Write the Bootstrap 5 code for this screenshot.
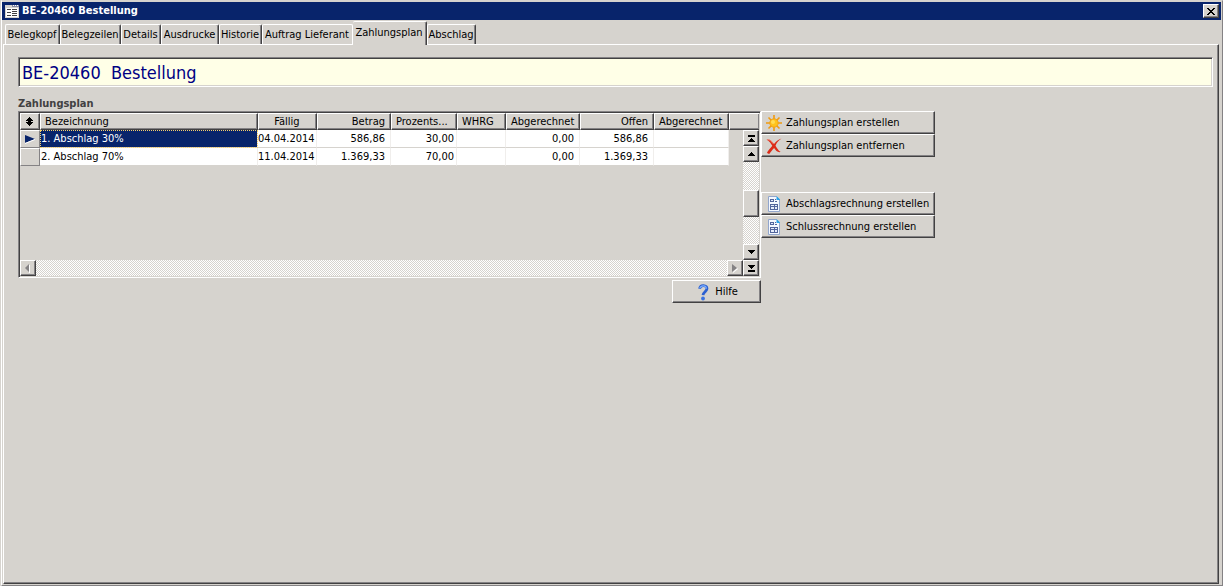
<!DOCTYPE html>
<html lang="de">
<head>
<meta charset="utf-8">
<meta name="viewport" content="width=device-width, initial-scale=1">
<title>BE-20460 Bestellung</title>
<link href="https://cdn.jsdelivr.net/npm/bootstrap@5.3.0/dist/css/bootstrap.min.css" rel="stylesheet">
<style>
:root{--face:#d6d3ce;--navy:#08246b;--shade:#848284;--dark:#424142}
body{background:var(--face);color:#000;font:11px/14px "DejaVu Sans Condensed","DejaVu Sans",sans-serif}
button{font:inherit;color:inherit;background:var(--face);border:0;padding:0;border-radius:0}
.window-frame{border:1px solid;border-color:var(--face) var(--shade) var(--shade) #fff;margin-left:1px}
.title-bar{background:var(--navy);color:#fff;height:18px;margin:1px 1px 0 0;padding:0 2px 0 3px;font-weight:bold}
.title-text{gap:3px}
.raised{border:1px solid;border-color:#fff var(--dark) var(--dark) #fff;box-shadow:inset -1px -1px var(--shade)}
.close-btn{width:16px;height:14px}
.tab-strip{padding:1px 0 0 3px;height:24px}
.tab-strip button{height:20px;border:1px solid #fff;border-right-color:var(--dark);border-bottom:0;box-shadow:inset -1px 0 var(--shade);border-radius:2px 2px 0 0;white-space:nowrap;padding:1px 1px 0 0}
.tab-strip .active{height:24px;position:relative;margin-bottom:-1px;padding-bottom:2px;padding-top:0}
.tab-strip button:nth-child(1){width:55px}
.tab-strip button:nth-child(2){width:61px}
.tab-strip button:nth-child(3){width:40px}
.tab-strip button:nth-child(4){width:58px}
.tab-strip button:nth-child(5){width:43px}
.tab-strip button:nth-child(6){width:91px;border-right-color:#fff;box-shadow:none}
.tab-strip button:nth-child(7){width:74px;border-left:0}
.tab-strip button:nth-child(8){width:49px}
.tab-page{border:1px solid;border-color:#fff var(--dark) var(--dark) #fff;box-shadow:inset -1px -1px var(--shade);margin:0 3px 1px 1px;padding:12px 5px 8px 14px}
.sunken{border:1px solid;border-color:var(--shade) #fff #fff var(--shade);box-shadow:inset 1px 1px var(--dark),inset -1px -1px var(--face)}
.headline{background:#ffffe7;color:#000084;font-size:18px;line-height:28px;height:30px;padding:1px 0 0 3px;white-space:pre}
.group-label{color:var(--dark);font-size:11px;line-height:14px;margin-top:10px}
.grid-frame{width:743px;height:167px;padding:1px}
.grid-body{height:147px}
.plan{table-layout:fixed;width:739px;border-collapse:separate;border-spacing:0}
.plan .c-mark{width:20px}
.plan .c-name{width:218px}
.plan .c-due{width:59px}
.plan .c-money{width:74px}
.plan .c-pct{width:66px}
.plan .c-cur{width:49px}
.plan .c-last{width:75px}
.plan th{height:17px;line-height:14px;padding:0 5px 0 4px;font-weight:normal;border:1px solid;border-color:#fff var(--dark) var(--dark) #fff;box-shadow:inset -1px -1px var(--shade);white-space:nowrap;overflow:hidden}
.plan th:last-child{border-right:0}
.plan td{height:18px;line-height:16px;padding:1px 5px 0 1px;background:#fff;border-right:1px solid #f0eeec;border-bottom:1px solid var(--face);white-space:nowrap}
.plan td.marker{background:var(--face);border:1px solid;border-color:#fff var(--shade) var(--shade) #fff;padding:0 0 0 4px;line-height:1px}
.plan td:last-child{background:none;border:0}
.plan td.picked{background:var(--navy);color:#fff;outline:1px dotted #f7cf6b;outline-offset:-1px}
.plan .due{padding:1px 1px 0 0}
.plan .pct{padding-right:2px}
.v-scroll{width:16px;height:130px}
.v-scroll button,.h-scroll button{width:16px;height:16px;display:flex;align-items:center;justify-content:center}
.thumb{height:27px}
.trough{background:repeating-conic-gradient(#fff 0 25%,var(--face) 0 50%) 0 0/2px 2px}
.action{height:23px;width:174px;text-align:left;padding:1px 0 0 4px;display:flex;align-items:center;gap:4px}
.action-group+.action-group{margin-top:35px}
.help-btn{width:89px;height:23px;display:flex;align-items:center;justify-content:center;gap:6px;margin-top:2px;padding:1px 0 0 2px}
svg{display:block;flex:none}
</style>
</head>
<body>
<main class="window-frame min-vh-100 d-flex flex-column">
  <header class="title-bar d-flex align-items-center justify-content-between">
    <span class="title-text d-flex align-items-center">
      <svg width="14" height="13" viewBox="0 0 14 13" shape-rendering="crispEdges"><path fill="#d6d3ce" d="M0 0h14v13H0z"/><path fill="#848aa5" d="M7 0h7v2H7z"/><path fill="#fff" d="M1 3h12v9H1zM8 0h1v1H8zM10 0h1v1h-1zM12 0h1v1h-1z"/><path fill="#424142" d="M2 4h4v1H2zM2 7h4v1H2zM2 10h4v1H2zM7 4h5v1H7zM7 6h5v1H7zM7 8h5v1H7zM7 10h5v1H7z"/></svg>
      BE-20460 Bestellung
    </span>
    <button class="close-btn raised d-flex align-items-center justify-content-center" aria-label="Schließen"><svg width="8" height="7" viewBox="0 0 8 7" shape-rendering="crispEdges"><path d="M0 0h2v1H0zM6 0h2v1H6zM1 1h2v1H1zM5 1h2v1H5zM2 2h4v1H2zM3 3h2v1H3zM2 4h4v1H2zM1 5h2v1H1zM5 5h2v1H5zM0 6h2v1H0zM6 6h2v1H6z"/></svg></button>
  </header>
  <nav class="tab-strip d-flex align-items-end" role="tablist">
    <button role="tab">Belegkopf</button><button role="tab">Belegzeilen</button><button role="tab">Details</button><button role="tab">Ausdrucke</button><button role="tab">Historie</button><button role="tab">Auftrag Lieferant</button><button role="tab" class="active" aria-selected="true">Zahlungsplan</button><button role="tab">Abschlag</button>
  </nav>
  <section class="tab-page flex-grow-1" role="tabpanel">
    <h1 class="headline sunken m-0 fw-normal">BE-20460  Bestellung</h1>
    <h2 class="group-label fw-bold mb-0">Zahlungsplan</h2>
    <div class="d-flex align-items-start">
      <div class="d-flex flex-column align-items-end">
        <div class="grid-frame sunken">
          <div class="grid-body position-relative">
            <table class="plan">
              <colgroup><col class="c-mark"><col class="c-name"><col class="c-due"><col class="c-money"><col class="c-pct"><col class="c-cur"><col class="c-money"><col class="c-money"><col class="c-last"><col></colgroup>
              <thead><tr>
                <th><svg width="9" height="9" viewBox="0 0 9 9" shape-rendering="crispEdges"><path d="M4 0h1v1H4zM3 1h3v1H3zM2 2h5v1H2zM1 3h7v1H1zM3 4h3v1H3zM1 5h7v1H1zM2 6h5v1H2zM3 7h3v1H3zM4 8h1v1H4z"/></svg></th>
                <th>Bezeichnung</th><th class="text-center">Fällig</th><th class="text-end">Betrag</th><th>Prozents...</th><th>WHRG</th><th>Abgerechnet</th><th class="text-end">Offen</th><th>Abgerechnet</th><th></th>
              </tr></thead>
              <tbody>
                <tr><td class="marker"><svg width="11" height="9" viewBox="0 0 11 9"><path fill="#08246b" d="M0 0l10 4-10 4z"/><path stroke="#fff" fill="none" d="M0 8.500l10-4"/></svg></td><td class="picked">1. Abschlag 30%</td><td class="due">04.04.2014</td><td class="text-end">586,86</td><td class="text-end pct">30,00</td><td></td><td class="text-end">0,00</td><td class="text-end">586,86</td><td></td><td></td></tr>
                <tr><td class="marker"></td><td>2. Abschlag 70%</td><td class="due">11.04.2014</td><td class="text-end">1.369,33</td><td class="text-end pct">70,00</td><td></td><td class="text-end">0,00</td><td class="text-end">1.369,33</td><td></td><td></td></tr>
              </tbody>
            </table>
            <div class="v-scroll position-absolute end-0 bottom-0 d-flex flex-column">
              <button class="raised" aria-label="Zum Anfang"><svg width="7" height="7" viewBox="0 0 7 7" shape-rendering="crispEdges"><path d="M0 0h7v2H0zM3 3h1v1H3zM2 4h3v1H2zM1 5h5v1H1zM0 6h7v1H0z"/></svg></button>
              <button class="raised" aria-label="Nach oben"><svg width="7" height="4" viewBox="0 0 7 4" shape-rendering="crispEdges"><path d="M3 0h1v1H3zM2 1h3v1H2zM1 2h5v1H1zM0 3h7v1H0z"/></svg></button>
              <div class="trough flex-grow-1"></div><div class="thumb raised"></div><div class="trough flex-grow-1"></div>
              <button class="raised" aria-label="Nach unten"><svg width="7" height="4" viewBox="0 0 7 4" shape-rendering="crispEdges"><path d="M0 0h7v1H0zM1 1h5v1H1zM2 2h3v1H2zM3 3h1v1H3z"/></svg></button>
            </div>
          </div>
          <div class="h-scroll d-flex">
            <button class="raised" aria-label="Nach links"><svg width="6" height="9" viewBox="0 0 6 9"><path fill="#fff" d="M4 1h1v8H4z"/><path fill="#848284" d="M4 0v8L0 4z"/></svg></button>
            <div class="trough flex-grow-1"></div>
            <button class="raised" aria-label="Nach rechts"><svg width="6" height="9" viewBox="0 0 6 9"><path fill="#fff" d="M1 9V8l4-4 1 1z"/><path fill="#848284" d="M0 0v8l5-4z"/></svg></button>
            <button class="raised" aria-label="Zum Ende"><svg width="7" height="7" viewBox="0 0 7 7" shape-rendering="crispEdges"><path d="M0 0h7v1H0zM1 1h5v1H1zM2 2h3v1H2zM3 3h1v1H3zM0 5h7v2H0z"/></svg></button>
          </div>
        </div>
        <button class="help-btn raised"><svg width="12" height="17" viewBox="1 0 12 17"><path d="M3.500 4.800C4 2.600 5.700 1.500 7.500 1.600c2.200.1 3.600 1.400 3.400 3.300C10.700 7.500 7.200 8 7 11.200" fill="none" stroke="#2c60d0" stroke-width="2.800"/><path d="M3.700 4.300C4.300 2.600 6 1.700 7.500 1.800c2 .1 3 1.400 2.800 3" fill="none" stroke="#7fb0ff" stroke-width="1.200"/><circle cx="7" cy="14.500" r="1.900" fill="#3971e0"/></svg>Hilfe</button>
      </div>
      <div class="d-flex flex-column">
        <div class="action-group">
          <button class="action raised"><svg width="16" height="16" viewBox="0 0 16 16"><path d="M8 0v16M0 8h16M2.500 2.500l11 11M13.500 2.500l-11 11" stroke="#f09a10" stroke-width="1.600"/><circle cx="8" cy="8" r="4.200" fill="#ffc31c" stroke="#f0a018"/><circle cx="7" cy="7" r="2" fill="#ffdc55"/></svg>Zahlungsplan erstellen</button>
          <button class="action raised"><svg width="16" height="16" viewBox="0 0 16 16"><path d="M.5 1.500C4 1 6 3 8 6c2-2.500 4-4.500 7.500-5.500C12 3 10.500 5 9.500 7.700c1.500 2.300 2.500 4.500 5.200 6.300-2.900.7-5-1.400-6.600-4C6 12 5 14 3.500 15.700c-1 .2-2-.2-2.500-1.200C2.500 12 4.500 10 6.300 7.800 5 5.600 3.700 3.300.5 1.500z" fill="#dc2c18"/><path d="M1.500 1.600c2.500 0 4 1.600 5.500 4" stroke="#f28a78" fill="none"/></svg>Zahlungsplan entfernen</button>
        </div>
        <div class="action-group">
          <button class="action raised"><svg width="16" height="16" viewBox="0 0 16 16"><path fill="#f4f8ff" stroke="#92a6cc" d="M2.500.5h8l3 3v12h-11z"/><path d="M10.500 0L14 3.500V4h-3.500z" fill="#29a2e8"/><path d="M4 3h4v3H4zM9 3h1v1H9zM9 5h2v1H9zM4 8h8v6H4z" fill="#52659c"/><path d="M5 4h2v1H5zM5 9h3v1H5zM9 9h2v1H9zM5 11h3v2H5zM9 11h2v2H9z" fill="#e5ecfb"/></svg>Abschlagsrechnung erstellen</button>
          <button class="action raised"><svg width="16" height="16" viewBox="0 0 16 16"><path fill="#f4f8ff" stroke="#92a6cc" d="M2.500.5h8l3 3v12h-11z"/><path d="M10.500 0L14 3.500V4h-3.500z" fill="#29a2e8"/><path d="M4 3h4v3H4zM9 3h1v1H9zM9 5h2v1H9zM4 8h8v6H4z" fill="#52659c"/><path d="M5 4h2v1H5zM5 9h3v1H5zM9 9h2v1H9zM5 11h3v2H5zM9 11h2v2H9z" fill="#e5ecfb"/></svg>Schlussrechnung erstellen</button>
        </div>
      </div>
    </div>
  </section>
</main>
<script src="https://cdn.jsdelivr.net/npm/bootstrap@5.3.0/dist/js/bootstrap.bundle.min.js"></script>
</body>
</html>
